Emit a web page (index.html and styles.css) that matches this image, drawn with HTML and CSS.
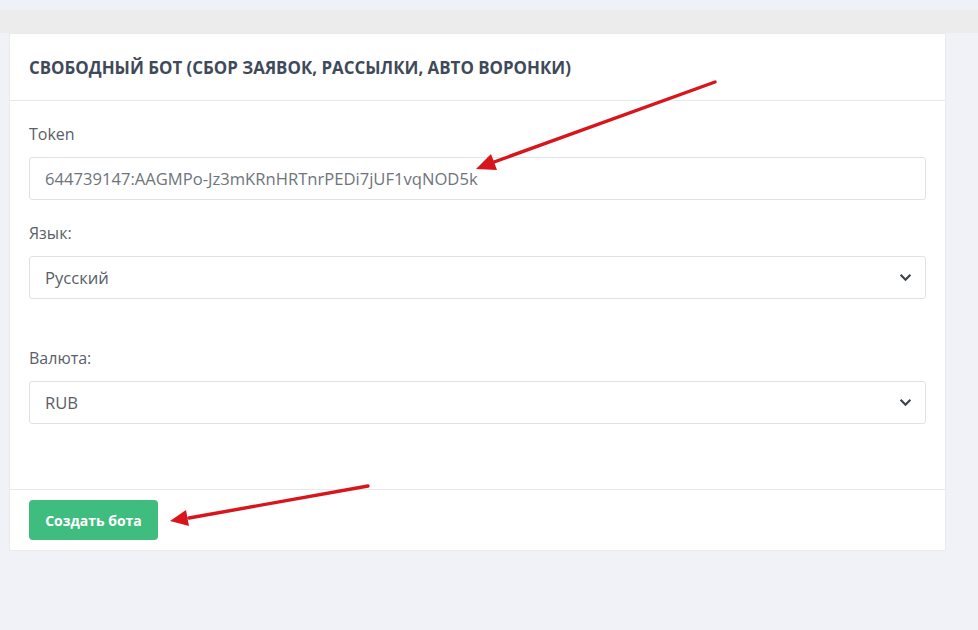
FILE: index.html
```html
<!DOCTYPE html>
<html lang="ru">
  <head>
    <meta charset="UTF-8" />
    <meta name="viewport" content="width=device-width, initial-scale=1.0" />
    <title>Свободный бот</title>
    <link rel="stylesheet" href="styles.css">
  </head>
  <body>
    <div class="topbar"></div>
    <div class="page">
      <div class="card">
        <div class="card-header">
          <h3 class="card-title">Свободный бот (сбор заявок, рассылки, авто воронки)</h3>
        </div>
        <div class="card-body">
          <div class="field">
            <label class="field-label">Token</label>
            <div class="control">644739147:AAGMPo-Jz3mKRnHRTnrPEDi7jUF1vqNOD5k</div>
          </div>
          <div class="field">
            <label class="field-label">Язык:</label>
            <div class="control select">
              <span>Русский</span>
              <svg class="chevron" viewBox="0 0 12 8"><path d="M1.5 1.5 6 6l4.5-4.5" /></svg>
            </div>
          </div>
          <div class="field field-spaced">
            <label class="field-label">Валюта:</label>
            <div class="control select">
              <span>RUB</span>
              <svg class="chevron" viewBox="0 0 12 8"><path d="M1.5 1.5 6 6l4.5-4.5" /></svg>
            </div>
          </div>
        </div>
        <div class="card-footer">
          <button class="btn-create">Создать бота</button>
        </div>
      </div>
    </div>

    <!-- red annotation arrows drawn over the form -->
    <svg class="arrows" viewBox="0 0 978 630">
      <line x1="715" y1="82" x2="494" y2="162" />
      <polygon points="476,169 491,154 497,170" />
      <line x1="368" y1="486" x2="189" y2="518" />
      <polygon points="170,521 186,510 189,526" />
    </svg>
  </body>
</html>
```

FILE: styles.css
```css
* {
  box-sizing: border-box;
}

html,
body {
  margin: 0;
  height: 100%;
}

body {
  position: relative;
  background-color: #f0f2f7;
  font-family: "Open Sans", "Noto Sans", sans-serif;
  font-size: 16px;
  color: #555b63;
  overflow: hidden;
}

.topbar {
  height: 33px;
  border-top: 10px solid #eef2f7;
  background-color: #ececed;
}

.page {
  padding-left: 9px;
}

.card {
  width: 937px;
  background-color: #fff;
  border: 1px solid #e8eaee;
  border-radius: 2px;
}

.card-header {
  height: 67px;
  display: flex;
  align-items: center;
  padding: 0 19px;
  border-bottom: 1px solid #e6e8ec;
}

.card-title {
  margin: 0;
  font-size: 16.9px;
  font-weight: 700;
  text-transform: uppercase;
  color: #3f4a59;
}

.card-body {
  padding: 23px 19px 65px;
}

.field + .field {
  margin-top: 23px;
}

.field.field-spaced {
  margin-top: 49px;
}

.field-label {
  display: block;
  line-height: 21px;
  margin-bottom: 12px;
  color: #5a6068;
}

.control {
  height: 43px;
  display: flex;
  align-items: center;
  padding: 0 15px;
  border: 1px solid #dfe2e6;
  border-radius: 3px;
  color: #6e747b;
  font-size: 16.6px;
}

.select {
  justify-content: space-between;
  color: #585e66;
}

.chevron {
  width: 13px;
  height: 9px;
  margin-right: -2px;
  fill: none;
  stroke: #3d434a;
  stroke-width: 2;
}

.card-footer {
  padding: 10px 19px;
  border-top: 1px solid #e6e8ec;
}

.btn-create {
  width: 129px;
  height: 40px;
  border: 0;
  border-radius: 4px;
  background-color: #3fbd7e;
  color: #fff;
  font-family: inherit;
  font-size: 14px;
  font-weight: 700;
}

.arrows {
  position: absolute;
  top: 0;
  left: 0;
  width: 978px;
  height: 630px;
  pointer-events: none;
}

.arrows line {
  stroke: #d8151c;
  stroke-width: 3.4;
  stroke-linecap: round;
}

.arrows polygon {
  fill: #d8151c;
}
```
